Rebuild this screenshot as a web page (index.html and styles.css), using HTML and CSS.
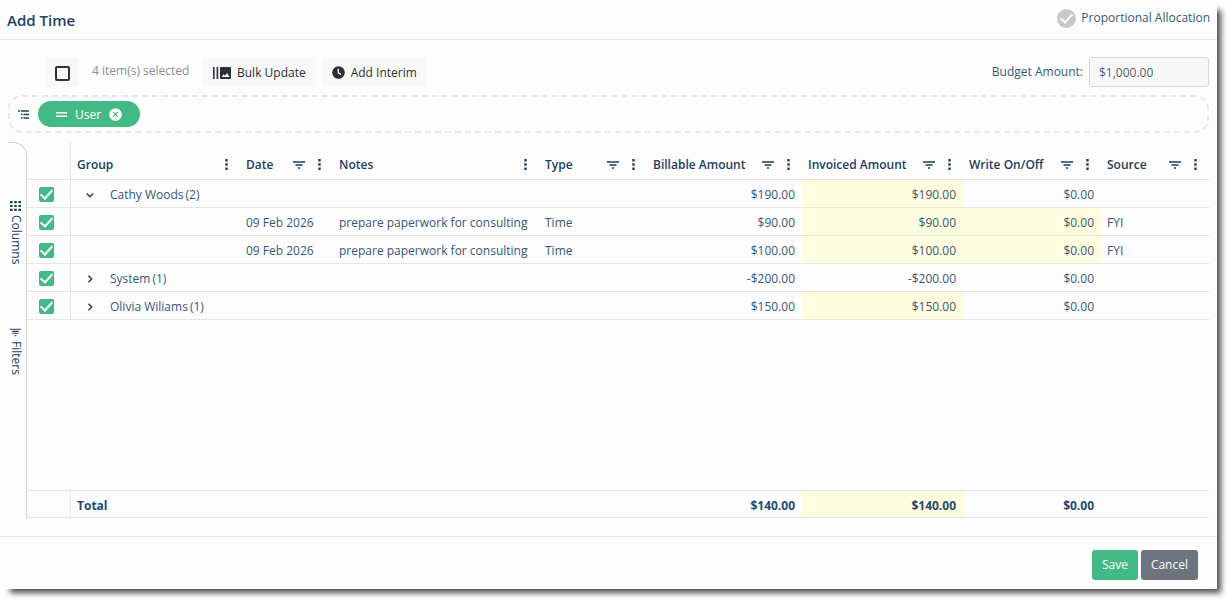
FILE: index.html
```html
<!DOCTYPE html>
<html lang="en">
<head>
  <meta charset="UTF-8" />
  <meta name="viewport" content="width=device-width, initial-scale=1" />
  <title>Add Time</title>
  <link rel="stylesheet" href="styles.css">
</head>
<body>
  <!-- shared icons -->
  <svg class="sprite" aria-hidden="true">
    <symbol id="filter" viewBox="0 0 12 8">
      <path d="M0 1h12M2.5 4h7M5 7h2" stroke="currentColor" stroke-width="1.4" fill="none" />
    </symbol>
    <symbol id="dots" viewBox="0 0 3 11">
      <path d="M.3 0h2.4v2.4H.3zM.3 4.3h2.4v2.4H.3zM.3 8.6h2.4V11H.3z" fill="currentColor" />
    </symbol>
    <symbol id="chevron-right" viewBox="0 0 8 8">
      <path d="M2.5 .8L5.7 4 2.5 7.2" stroke="currentColor" stroke-width="1.5" fill="none" />
    </symbol>
    <symbol id="chevron-down" viewBox="0 0 8 8">
      <path d="M.8 2.5L4 5.7l3.2-3.2" stroke="currentColor" stroke-width="1.5" fill="none" />
    </symbol>
  </svg>

  <div class="dialog">
    <header class="dialog-header">
      <h1>Add Time</h1>
      <label class="allocation"><input type="checkbox" class="round-check" checked /> Proportional Allocation</label>
    </header>

    <main class="dialog-body">
      <div class="toolbar">
        <label class="select-all"><input type="checkbox" class="box" aria-label="Select all" /></label>
        <span class="selected-count">4 item(s) selected</span>
        <button class="tool-btn">
          <svg width="18" height="12" viewBox="0 0 18 12"><path d="M0 0h1.6v12H0zM3.6 0h1.6v12H3.6z" fill="currentColor" /><path fill-rule="evenodd" d="M8 0h9a1 1 0 0 1 1 1v10a1 1 0 0 1-1 1H8a1 1 0 0 1-1-1V1a1 1 0 0 1 1-1zM8.6 10h8l-2.6-4-2 2.8-1.3-1.5z" fill="currentColor" /></svg>
          Bulk Update
        </button>
        <button class="tool-btn">
          <svg width="13" height="13" viewBox="0 0 13 13"><circle cx="6.5" cy="6.5" r="6.3" fill="currentColor" /><path d="M6.3 2.8v4l2.8 1.7" stroke="#fff" stroke-width="1.3" fill="none" /></svg>
          Add Interim
        </button>
        <label class="budget">Budget Amount: <input type="text" value="$1,000.00" readonly /></label>
      </div>

      <div class="group-zone">
        <svg width="11" height="9" viewBox="0 0 11 9"><path d="M0 1h2M3 1h8M3 4.5h1.6M5.6 4.5H11M3 8h1.6M5.6 8H11" stroke="currentColor" stroke-width="1.5" fill="none" /></svg>
        <span class="chip">
          <svg width="11" height="5" viewBox="0 0 11 5"><path d="M0 .8h11M0 4.2h11" stroke="currentColor" stroke-width="1.5" /></svg>
          User
          <button class="chip-remove" aria-label="Remove">
            <svg width="13" height="13" viewBox="0 0 13 13"><circle cx="6.5" cy="6.5" r="6.3" fill="#fff" /><path d="M4.2 4.2l4.6 4.6M8.8 4.2L4.2 8.8" stroke="#43b985" stroke-width="1.2" /></svg>
          </button>
        </span>
      </div>

      <div class="grid">
        <div class="side-bar">
          <button class="side-tab">
            <svg width="11" height="10" viewBox="0 0 11 10"><path d="M0 1.2h11M0 5h11M0 8.8h11" stroke="currentColor" stroke-width="2.2" stroke-dasharray="2.6 1.6" /></svg>
            <span>Columns</span>
          </button>
          <button class="side-tab">
            <svg width="11" height="9" viewBox="0 0 12 9"><path d="M0 1h12M2.5 3.3h7M2.5 5.3h7M5 8h2" stroke="currentColor" stroke-width="1.2" /></svg>
            <span>Filters</span>
          </button>
        </div>

        <div class="grid-main">
          <table>
            <colgroup>
              <col class="c-check"><col class="c-group"><col class="c-date"><col><col class="c-type"><col class="c-bill"><col class="c-inv"><col class="c-write"><col class="c-source">
            </colgroup>
            <thead>
              <tr>
                <th></th>
                <th><div class="head">Group <button aria-label="Menu"><svg class="dots"><use href="#dots" /></svg></button></div></th>
                <th><div class="head">Date <button aria-label="Filter"><svg class="filter"><use href="#filter" /></svg></button><button aria-label="Menu"><svg class="dots"><use href="#dots" /></svg></button></div></th>
                <th><div class="head">Notes <button aria-label="Menu"><svg class="dots"><use href="#dots" /></svg></button></div></th>
                <th><div class="head">Type <button aria-label="Filter"><svg class="filter"><use href="#filter" /></svg></button><button aria-label="Menu"><svg class="dots"><use href="#dots" /></svg></button></div></th>
                <th><div class="head">Billable Amount <button aria-label="Filter"><svg class="filter"><use href="#filter" /></svg></button><button aria-label="Menu"><svg class="dots"><use href="#dots" /></svg></button></div></th>
                <th><div class="head">Invoiced Amount <button aria-label="Filter"><svg class="filter"><use href="#filter" /></svg></button><button aria-label="Menu"><svg class="dots"><use href="#dots" /></svg></button></div></th>
                <th><div class="head">Write On/Off <button aria-label="Filter"><svg class="filter"><use href="#filter" /></svg></button><button aria-label="Menu"><svg class="dots"><use href="#dots" /></svg></button></div></th>
                <th><div class="head">Source <button aria-label="Filter"><svg class="filter"><use href="#filter" /></svg></button><button aria-label="Menu"><svg class="dots"><use href="#dots" /></svg></button></div></th>
              </tr>
            </thead>
            <tbody>
              <tr>
                <td><input type="checkbox" class="check" aria-label="Select Cathy Woods" checked /></td>
                <td><div class="group-name"><button aria-label="Collapse"><svg class="chevron"><use href="#chevron-down" /></svg></button>Cathy Woods<span>(2)</span></div></td>
                <td></td><td></td><td></td>
                <td class="num">$190.00</td>
                <td class="num edit">$190.00</td>
                <td class="num">$0.00</td>
                <td></td>
              </tr>
              <tr>
                <td><input type="checkbox" class="check" aria-label="Select row" checked /></td>
                <td></td>
                <td>09 Feb 2026</td>
                <td>prepare paperwork for consulting</td>
                <td>Time</td>
                <td class="num">$90.00</td>
                <td class="num edit">$90.00</td>
                <td class="num edit">$0.00</td>
                <td>FYI</td>
              </tr>
              <tr>
                <td><input type="checkbox" class="check" aria-label="Select row" checked /></td>
                <td></td>
                <td>09 Feb 2026</td>
                <td>prepare paperwork for consulting</td>
                <td>Time</td>
                <td class="num">$100.00</td>
                <td class="num edit">$100.00</td>
                <td class="num edit">$0.00</td>
                <td>FYI</td>
              </tr>
              <tr>
                <td><input type="checkbox" class="check" aria-label="Select System" checked /></td>
                <td><div class="group-name"><button aria-label="Expand"><svg class="chevron"><use href="#chevron-right" /></svg></button>System<span>(1)</span></div></td>
                <td></td><td></td><td></td>
                <td class="num">-$200.00</td>
                <td class="num">-$200.00</td>
                <td class="num">$0.00</td>
                <td></td>
              </tr>
              <tr>
                <td><input type="checkbox" class="check" aria-label="Select Olivia Wiliams" checked /></td>
                <td><div class="group-name"><button aria-label="Expand"><svg class="chevron"><use href="#chevron-right" /></svg></button>Olivia Wiliams<span>(1)</span></div></td>
                <td></td><td></td><td></td>
                <td class="num">$150.00</td>
                <td class="num edit">$150.00</td>
                <td class="num">$0.00</td>
                <td></td>
              </tr>
            </tbody>
          </table>

          <table class="totals">
            <colgroup>
              <col class="c-check"><col class="c-group"><col class="c-date"><col><col class="c-type"><col class="c-bill"><col class="c-inv"><col class="c-write"><col class="c-source">
            </colgroup>
            <tbody>
              <tr>
                <td></td>
                <td>Total</td>
                <td></td><td></td><td></td>
                <td class="num">$140.00</td>
                <td class="num edit">$140.00</td>
                <td class="num">$0.00</td>
                <td></td>
              </tr>
            </tbody>
          </table>
        </div>
      </div>
    </main>

    <footer class="dialog-footer">
      <button class="btn save">Save</button>
      <button class="btn cancel">Cancel</button>
    </footer>
  </div>
</body>
</html>
```
FILE: styles.css
```css
* {
  box-sizing: border-box;
}

body {
  margin: 0;
  min-height: 100vh;
  padding: 0 15px 15px 0;
  display: flex;
  background: #fff;
  color: #365878;
  font-family: 'Segoe UI', 'Open Sans', sans-serif;
  font-size: 12px;
  line-height: 16px;
}

button,
input {
  font: inherit;
  color: inherit;
}

button {
  border: none;
  background: none;
  padding: 0;
  cursor: pointer;
}

svg {
  display: block;
  flex: none;
}

.sprite {
  position: absolute;
  width: 0;
  height: 0;
}

.dialog {
  flex: 1;
  min-width: 0;
  display: flex;
  flex-direction: column;
  background: #fdfdfd;
  box-shadow: 7px 7px 6px -3px rgba(0, 0, 0, 0.7);
}

.dialog-header {
  display: flex;
  justify-content: space-between;
  height: 40px;
  padding: 0 7px;
  border-bottom: 1px solid #e6e6e6;
}

h1 {
  margin: 0;
  font-size: 15px;
  line-height: 40px;
  font-weight: 600;
  color: #1f4264;
}

.allocation {
  display: flex;
  align-items: center;
  gap: 5px;
  height: 36px;
}

/* Checkboxes */
input[type="checkbox"] {
  appearance: none;
  display: grid;
  place-items: center;
  margin: 0;
  flex: none;
}

.check,
.round-check {
  width: 15px;
  height: 15px;
  border-radius: 2px;
  background: #43b985;
}

.round-check {
  width: 19px;
  height: 19px;
  border-radius: 50%;
  background: #c8c8c8;
}

.check:checked::before,
.round-check:checked::before {
  content: "";
  width: 5px;
  height: 10px;
  margin-bottom: 3px;
  border: solid #fff;
  border-width: 0 2px 2px 0;
  transform: rotate(42deg);
}

.box {
  width: 15px;
  height: 15px;
  border: 2px solid #333;
  border-radius: 2px;
}

/* Toolbar */
.dialog-body {
  flex: 1;
  display: flex;
  flex-direction: column;
  padding: 17px 8px 18px;
}

.toolbar {
  display: flex;
  align-items: center;
  height: 30px;
  padding-left: 37px;
}

.select-all {
  display: grid;
  place-items: center;
  width: 34px;
  height: 30px;
  padding-top: 2px;
  border-radius: 3px;
  background: #f8f8f8;
}

.selected-count {
  width: 111px;
  margin: 0 0 2px 13px;
  color: #8a8f94;
}

.tool-btn {
  display: flex;
  align-items: center;
  gap: 6px;
  height: 30px;
  margin-right: 6px;
  padding: 1px 10px 0;
  border-radius: 3px;
  background: #f8f8f8;
  color: #2b3036;
}

.budget {
  display: flex;
  align-items: center;
  gap: 6px;
  margin-left: auto;
}

.budget input {
  width: 120px;
  height: 30px;
  padding: 0 9px;
  border: 1px solid #d6d6d6;
  border-radius: 3px;
  background: #f7f7f7;
  color: #5a6067;
}

/* Row grouping */
.group-zone {
  display: flex;
  align-items: center;
  gap: 9px;
  height: 38px;
  margin: 8px 0 9px;
  padding: 0 8px;
  border: 2px dashed #e8e8e8;
  border-radius: 14px;
  color: #1f4264;
}

.chip {
  display: flex;
  align-items: center;
  gap: 8px;
  height: 26px;
  padding: 1px 18px 0;
  border-radius: 13px;
  background: #43b985;
  color: #fff;
}

/* Grid */
.grid {
  flex: 1;
  display: flex;
}

.side-bar {
  display: flex;
  flex-direction: column;
  gap: 64px;
  width: 19px;
  flex: none;
  padding-top: 58px;
  border-top: 1px solid #d2d2d2;
  border-right: 1px solid #d2d2d2;
  border-top-right-radius: 14px;
}

.side-tab {
  display: flex;
  flex-direction: column;
  align-items: center;
  gap: 4px;
  width: 15px;
  color: #1f4264;
}

.side-tab span {
  writing-mode: vertical-rl;
}

.grid-main {
  flex: 1;
  min-width: 0;
  display: flex;
  flex-direction: column;
  justify-content: space-between;
}

table {
  width: 100%;
  table-layout: fixed;
  border-collapse: separate;
  border-spacing: 0;
}

.c-check { width: 44px; }
.c-group { width: 169px; }
.c-date { width: 93px; }
.c-type { width: 108px; }
.c-bill { width: 155px; }
.c-inv { width: 161px; }
.c-write { width: 138px; }
.c-source { width: 108px; }

th,
td {
  height: 28px;
  padding: 3px 7px 0 6px;
  border-bottom: 1px solid #e4e4e4;
  text-align: left;
  white-space: nowrap;
}

th {
  height: 38px;
  padding: 8px 12px 0 6px;
  font-weight: 600;
  color: #1c3d5e;
}

th:first-child,
td:first-child {
  padding: 1px 12px 0;
  border-right: 1px solid #e4e4e4;
}

.head {
  display: flex;
  align-items: center;
  gap: 13px;
}

.head button:first-of-type {
  margin-left: auto;
}

.filter {
  width: 12px;
  height: 8px;
}

.dots {
  width: 3px;
  height: 11px;
}

.chevron {
  width: 8px;
  height: 8px;
}

.group-name {
  display: flex;
  align-items: center;
  gap: 2px;
}

.group-name button {
  margin: 0 14px 0 9px;
  color: #1f4264;
}

.num {
  text-align: right;
}

.edit {
  background: #fffddf;
}

.totals td {
  border-top: 1px solid #e4e4e4;
  font-weight: 700;
  color: #1f4a73;
}

/* Footer */
.dialog-footer {
  display: flex;
  justify-content: flex-end;
  gap: 3px;
  padding: 13px 19px 9px;
  border-top: 1px solid #e6e6e6;
}

.btn {
  height: 30px;
  padding: 0 10px;
  border-radius: 3px;
  color: #fff;
}

.save {
  background: #43b985;
}

.cancel {
  background: #6c757d;
}
```
